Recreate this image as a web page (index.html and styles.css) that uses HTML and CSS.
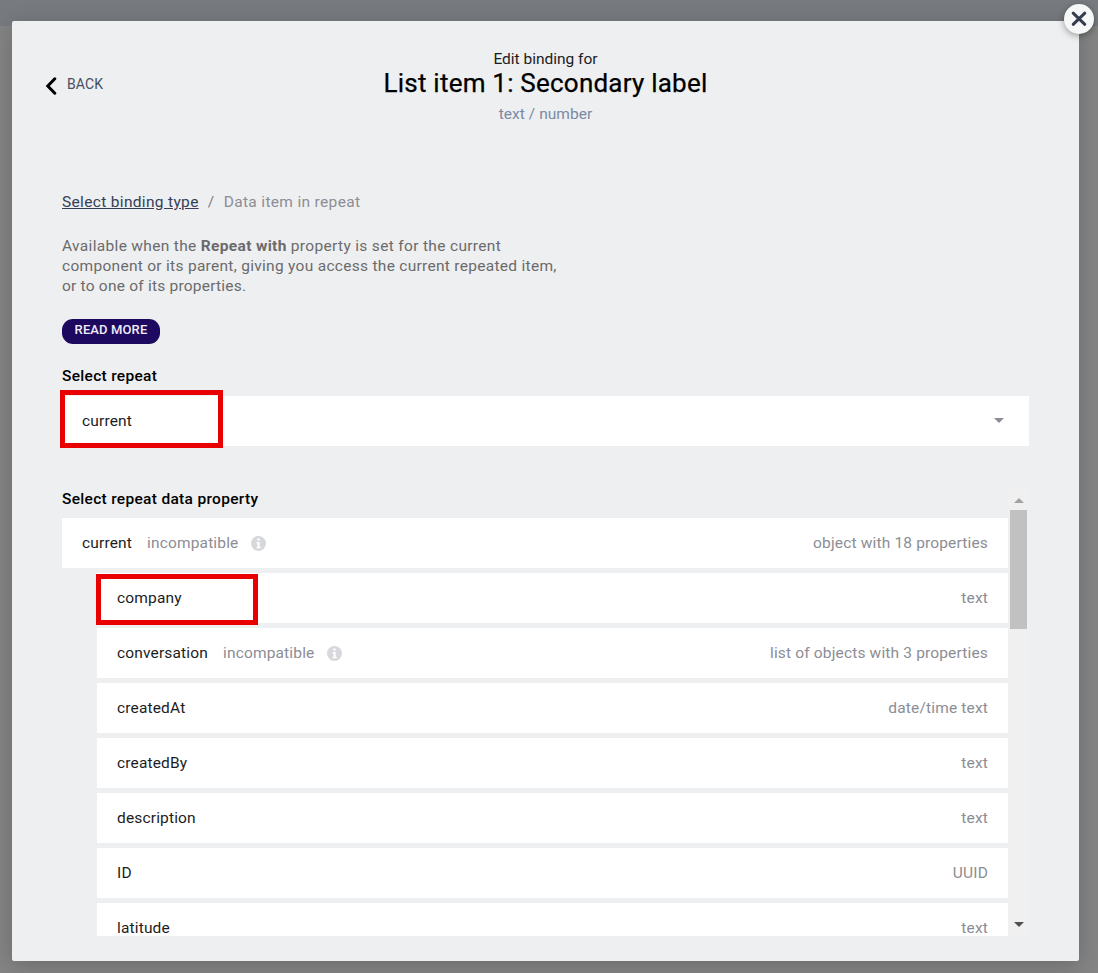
FILE: index.html
```html
<!DOCTYPE html>
<html lang="en">
<head>
<meta charset="utf-8">
<title>Edit binding</title>
<link rel="stylesheet" href="styles.css">
</head>
<body>
<main class="modal">
  <button class="close" aria-label="Close"><svg width="30" height="30" viewBox="0 0 30 30"><path d="M9.2 9.2 20.8 20.3M20.8 9.2 9.2 20.3"/></svg></button>
  <header class="header">
    <a class="back"><svg width="12" height="18" viewBox="0 0 12 18"><path d="M9.8 1.8 2.8 9l7 7.2"/></svg><span>BACK</span></a>
    <div class="heading">
      <div class="eyebrow">Edit binding for</div>
      <h1>List item 1: Secondary label</h1>
      <div class="kind">text / number</div>
    </div>
  </header>
  <nav class="crumbs"><a class="crumb-link">Select binding type</a><span class="slash">/</span><span class="crumb-now">Data item in repeat</span></nav>
  <p class="about"><span class="l1">Available when the <b>Repeat with</b> property is set for the current</span><br><span class="l2">component or its parent, giving you access the current repeated item,</span><br><span class="l3">or to one of its properties.</span></p>
  <a class="more">READ MORE</a>
  <h2 class="label">Select repeat</h2>
  <div class="select marked"><span>current</span><i class="caret"></i></div>
  <section class="list">
    <div class="rows">
      <h2 class="label label-list">Select repeat data property</h2>
      <div class="row root"><span>current</span><span class="bad">incompatible</span><svg class="info" viewBox="0 0 15 15"><circle cx="7.5" cy="7.5" r="7.5"/><path d="M6.3 2.5h2.4v2H6.3zM5.5 6h3.2v5h1v1.3H5.5V11h1V7.3h-1z"/></svg><span class="type">object with 18 properties</span></div>
      <div class="row marked"><span>company</span><span class="type">text</span></div>
      <div class="row"><span>conversation</span><span class="bad">incompatible</span><svg class="info" viewBox="0 0 15 15"><circle cx="7.5" cy="7.5" r="7.5"/><path d="M6.3 2.5h2.4v2H6.3zM5.5 6h3.2v5h1v1.3H5.5V11h1V7.3h-1z"/></svg><span class="type">list of objects with 3 properties</span></div>
      <div class="row"><span>createdAt</span><span class="type">date/time text</span></div>
      <div class="row"><span>createdBy</span><span class="type">text</span></div>
      <div class="row"><span>description</span><span class="type">text</span></div>
      <div class="row"><span>ID</span><span class="type">UUID</span></div>
      <div class="row"><span>latitude</span><span class="type">text</span></div>
    </div>
    <div class="scrollbar"><i class="up"></i><div class="thumb"></div><i class="down"></i></div>
  </section>
</main>
</body>
</html>
```
FILE: styles.css
```css
*, *::before, *::after { box-sizing: border-box; }
body {
  margin: 0;
  height: 973px;
  overflow: hidden;
  padding: 21px 19px 12px 12px;
  background: linear-gradient(#777b7f 26px, #848484 26px);
  font: 15.5px/20px Roboto, "Noto Sans", sans-serif;
  letter-spacing: .16px;
  color: #1c1c1e;
}
.modal {
  position: relative;
  height: 940px;
  padding: 0 50px;
  background: #eeeff1;
  border-radius: 2px;
  box-shadow: 0 4px 22px rgba(0, 0, 0, .2);
}
.close {
  position: absolute;
  top: -17px;
  right: -15px;
  width: 30px;
  height: 30px;
  padding: 0;
  border: 0;
  border-radius: 50%;
  background: #f6f7f7;
  box-shadow: 0 2px 7px rgba(0, 0, 0, .35);
}
.close svg { display: block; }
.close path { fill: none; stroke: #343d50; stroke-width: 3; stroke-linecap: round; }
.header {
  display: grid;
  grid-template-columns: 100px 1fr 100px;
  height: 171px;
  padding-top: 28px;
}
.back {
  display: flex;
  align-items: center;
  gap: 10px;
  height: 18px;
  margin: 28px 0 0 -17px;
  font-size: 14px;
  letter-spacing: .1px;
  color: #465063;
}
.back span { margin-top: -4px; }
.back path { fill: none; stroke: #000; stroke-width: 3; stroke-linecap: round; }
.heading { text-align: center; }
.eyebrow { letter-spacing: 0; }
h1 { margin: 0; font-size: 26px; line-height: 28px; font-weight: 400; letter-spacing: .22px; color: #000; -webkit-text-stroke: .25px #000; }
.kind { margin-top: 7px; letter-spacing: .04px; color: #7b8aa3; }
.crumbs { display: flex; letter-spacing: .33px; }
.crumb-link { color: #354056; text-decoration: underline; }
.slash { width: 25px; text-align: center; color: #7d7e85; }
.crumb-now, .type, .bad { color: #8c8d94; }
.about { height: 60px; margin: 24px 0 23px; color: #6b6b6b; white-space: nowrap; }
.l1 { letter-spacing: .33px; }
.l2 { letter-spacing: .29px; }
.l3 { letter-spacing: .22px; }
.about b { font-weight: 700; }
.more {
  display: block;
  width: 98px;
  height: 25px;
  border-radius: 11px;
  background: #1d0a60;
  color: #f0edf8;
  font: 500 13px/22px Roboto, sans-serif;
  letter-spacing: .12px;
  text-align: center;
}
.label { margin: 22px 0 10px; font-size: 15.5px; line-height: 20px; font-weight: 500; letter-spacing: .31px; color: #000; }
.select {
  display: flex;
  align-items: center;
  justify-content: space-between;
  height: 50px;
  padding: 0 25px 0 20px;
  background: #fff;
}
.marked { position: relative; }
.marked::after {
  content: "";
  position: absolute;
  left: -2px;
  top: -6px;
  width: 163px;
  height: 58px;
  border: 5px solid #e90000;
}
.row.marked::after { left: -1px; top: 1px; width: 162px; height: 51px; }
.row.marked { z-index: 1; }
.caret, .up, .down { width: 0; height: 0; border: 5px solid transparent; border-bottom-width: 0; }
.caret { margin-bottom: 2px; border-top: 5px solid #8c8d94; }
.list { display: flex; height: 448px; margin-top: 42px; overflow: hidden; }
.rows { flex: 1; }
.label-list { margin: 1px 0 9px; }
.row {
  display: flex;
  align-items: center;
  height: 50px;
  margin: 0 0 5px 35px;
  padding: 0 20px;
  background: #fff;
}
.row.root { margin-left: 0; }
.bad { margin-left: 15px; }
.info { width: 15px; height: 15px; margin-left: 13px; }
.info circle { fill: #d7d8dc; }
.info path { fill: #fff; }
.type { margin-left: auto; }
.scrollbar {
  display: flex;
  flex-direction: column;
  align-items: center;
  width: 21px;
  padding: 10px 0 9px;
  background: #f0f0f0;
}
.up { border-width: 0 5px 5px; border-bottom-color: #a3a3a3; }
.thumb { width: 17px; height: 119px; margin-top: 7px; background: #c1c1c1; }
.down { margin-top: auto; border-top-color: #505050; }
```
